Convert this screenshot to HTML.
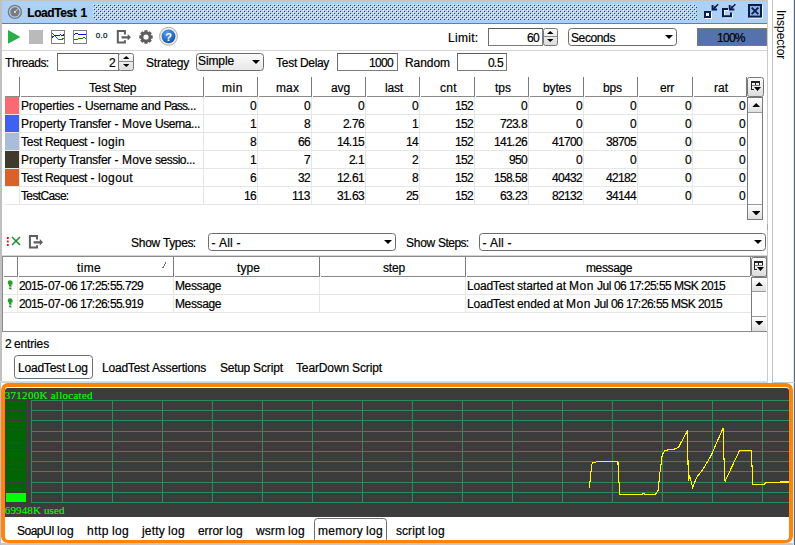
<!DOCTYPE html><html><head><meta charset="utf-8"><title>LoadTest 1</title><style>
*{box-sizing:border-box;margin:0;padding:0}
html,body{width:795px;height:545px;overflow:hidden;background:#fff}
body{position:relative;font-family:"Liberation Sans",sans-serif;font-size:12px;color:#000;-webkit-text-stroke-width:0.2px}
.a{position:absolute}
.t{position:absolute;white-space:nowrap;line-height:14px;height:14px}
.w{position:absolute;top:0}
.r{text-align:right}
.c{text-align:center}
.hl{position:absolute;height:1px;background:#e6e6e6}
.vl{position:absolute;width:1px;background:#e6e6e6}
.inp{position:absolute;background:#fff;border:1px solid #7c7c7c;border-top-color:#5c5c5c;border-left-color:#6c6c6c}
.cmb{position:absolute;background:#fff;border:1px solid #6c6c6c;border-radius:3.500px}
.sb{position:absolute;background:linear-gradient(#fbfbfb,#dcdcdc);border:1px solid #787878;border-radius:2.500px}
</style></head><body>
<div class="a" style="left:0px;top:0px;width:768px;height:1px;background:#c4c4c4"></div>
<div class="a" style="left:794px;top:0px;width:1px;height:545px;background:#56667a"></div>
<div class="a" style="left:793px;top:0px;width:1px;height:545px;background:#e4e8ee"></div>
<div class="a" style="left:0px;top:0px;width:2px;height:382px;background:#c0c0c0"></div>
<div class="a" style="left:2px;top:1px;width:765px;height:22px;background:#acd0f6"></div>
<div class="a" style="left:2px;top:23px;width:765px;height:1px;background:#7a7a7a"></div>
<svg class="a" style="left:93px;top:4px" width="604" height="16" shape-rendering="crispEdges"><defs><pattern id="dp" width="4" height="4" patternUnits="userSpaceOnUse"><rect x="0" y="0" width="1" height="1" fill="#fff"/><rect x="2" y="2" width="1" height="1" fill="#fff"/><rect x="1" y="1" width="1" height="1" fill="#1f3c8c"/><rect x="3" y="3" width="1" height="1" fill="#1f3c8c"/></pattern></defs><rect width="604" height="16" fill="url(#dp)"/></svg>
<svg class="a" style="left:7px;top:4px" width="16" height="16" viewBox="0 0 16 16"><circle cx="7.900" cy="7.900" r="6.500" fill="none" stroke="#7c7c7c" stroke-width="1.400"/><circle cx="7.900" cy="7.900" r="4.600" fill="#7a7a7a"/><path d="M7.900 7.900L11 4.800" stroke="#d0dcec" stroke-width="0.900"/><circle cx="7.900" cy="7.900" r="1" fill="#e8f0fa"/></svg>
<div class="t" id="title" style="left:27.25px;top:6px;letter-spacing:-0.436px;font-weight:bold;">LoadTest</div>
<div class="t" style="left:80.60px;top:6px;letter-spacing:0.000px;font-weight:bold;">1</div>
<svg class="a" style="left:698px;top:0" width="70" height="24" viewBox="698 0 70 24"><g transform="translate(1,1)" opacity="0.9"><rect x="705" y="12" width="5" height="5" fill="none" stroke="#fff" stroke-width="2"/><path d="M723 9v7.300h8v-3.800M723 9h5" fill="none" stroke="#fff" stroke-width="2"/><rect x="749" y="5" width="12" height="11.600" fill="none" stroke="#fff" stroke-width="2"/></g><rect x="705" y="12" width="5" height="5" fill="#fff" stroke="#0c1c4c" stroke-width="2"/><path d="M711.6 10.6v-5.500h1.800v3.700h3.700v1.800z" fill="#0c1c4c"/><path d="M713.4 8.8v-3.700l3.700 3.700z" fill="#2e4e9e"/><path d="M713.1 9.1L718.2 4.2" stroke="#0c1c4c" stroke-width="1.500"/><path d="M728 9h-5v7.300h8v-3.800" fill="none" stroke="#0c1c4c" stroke-width="2"/><path d="M728.8 10.6v-5.500h1.800v3.700h3.700v1.800z" fill="#0c1c4c"/><path d="M730.6 8.8v-3.700l3.700 3.700z" fill="#2e4e9e"/><path d="M730.3 9.1L735.4 4.2" stroke="#0c1c4c" stroke-width="1.500"/><rect x="749" y="5" width="12" height="11.600" fill="#8ab2e8" stroke="#0c1c4c" stroke-width="2"/><path d="M751.700 7.600l6.600 6.600M758.300 7.600l-6.600 6.600" stroke="#0c1c4c" stroke-width="1.900"/></svg>
<div class="a" style="left:767px;top:0px;width:1px;height:382px;background:#cacaca"></div>
<div class="a" style="left:767px;top:224px;width:1px;height:6px;background:#a8a8a8"></div>
<div class="a" style="left:772px;top:0px;width:1px;height:383px;background:#bebebe"></div>
<div class="t" id="insp" style="left:788.400px;top:10px;transform-origin:0 0;transform:rotate(90deg);letter-spacing:0px;-webkit-text-stroke-width:0">Inspector</div>
<div class="a" style="left:0px;top:381px;width:768px;height:1px;background:#dcdcdc"></div>
<div class="a" style="left:0px;top:382px;width:768px;height:1px;background:#d4d4d4"></div>
<div class="a" style="left:773px;top:382px;width:22px;height:1px;background:#c8c8c8"></div>
<svg class="a" style="left:0;top:24px" width="200" height="26" viewBox="0 24 200 26"><path d="M8 30L20.500 36.900L8 43.800z" fill="#2bae4a"/><rect x="29" y="30" width="14" height="14" fill="#bababa"/><rect x="51.500" y="30.500" width="13" height="13" fill="#fff" stroke="#7f7f7f"/><path d="M52 32.800L54.700 35.500L58.200 39.500H61.500L64 38.300" fill="none" stroke="#108010" stroke-width="1" shape-rendering="crispEdges"/><path d="M52 37.600L54.500 35.300H59.500L60.300 34.600L61.500 35.300H63L64 34.500" fill="none" stroke="#1010e0" stroke-width="1" shape-rendering="crispEdges"/><rect x="73.500" y="30.500" width="13" height="13" fill="#fff" stroke="#7f7f7f"/><path d="M74 34.400L75.500 33.500H77.500L78.500 34.400H82L83 35.200L84.500 34.400H86" fill="none" stroke="#1010e0" stroke-width="1" shape-rendering="crispEdges"/><path d="M74 39.500H77L78.500 38.500H82.500L84 37.300L86 38.500" fill="none" stroke="#108010" stroke-width="1" shape-rendering="crispEdges"/><path d="M124.9 34.4V31H117.8V42.5H124.9V40.3" fill="none" stroke="#5e5e5e" stroke-width="2"/><path d="M121.5 36.2h6.200v-2.100l3.200 3.250l-3.200 3.250v-2.100h-6.200z" fill="#5e5e5e"/></svg>
<div class="t" style="left:95.700px;top:28.800px;font-size:8px;color:#022;letter-spacing:0.350px;-webkit-text-stroke-width:0.250px">0.0</div>
<svg class="a" style="left:0;top:0" width="200" height="50"><path d="M152.73 35.49L152.73 38.51L150.61 38.95L150.63 38.88L151.83 40.70L149.70 42.83L147.88 41.63L147.95 41.61L147.51 43.73L144.49 43.73L144.05 41.61L144.12 41.63L142.30 42.83L140.17 40.70L141.37 38.88L141.39 38.95L139.27 38.51L139.27 35.49L141.39 35.05L141.37 35.12L140.17 33.30L142.30 31.17L144.12 32.37L144.05 32.39L144.49 30.27L147.51 30.27L147.95 32.39L147.88 32.37L149.70 31.17L151.83 33.30L150.63 35.12L150.61 35.05z" fill="#5e5e5e"/><circle cx="146" cy="37" r="2.600" fill="#fff"/><defs><radialGradient id="hg" cx="0.4" cy="0.3" r="0.8"><stop offset="0" stop-color="#5aa0f0"/><stop offset="1" stop-color="#0a4aa8"/></radialGradient></defs><circle cx="168.500" cy="36.300" r="9" fill="#ececee" stroke="#a4a6aa" stroke-width="0.900"/><circle cx="168.500" cy="36.300" r="6.900" fill="url(#hg)"/><text x="168.500" y="40.500" text-anchor="middle" font-family="Liberation Sans" font-weight="bold" font-size="11" fill="#fff" style="-webkit-text-stroke-width:0">?</text></svg>
<div class="hl" style="left:2px;top:50px;width:765px;background:#d4d4d4"></div>
<div class="t" style="left:448px;top:31px;"><span class="w" style="left:0px;letter-spacing:0.333px">Limit</span><span class="w" style="left:26.8328px">:</span></div>
<div class="inp" style="left:488px;top:28px;width:55px;height:18px"></div>
<div class="t" style="left:527px;top:31px"><span class="w" style="left:0px;letter-spacing:-0.673px">60</span></div>
<div class="sb" style="left:543px;top:28px;width:15px;height:18px"></div>
<svg class="a" style="left:547.25px;top:30.8px" width="6.5" height="3"><path d="M0 3h6.5L3.25 0z" fill="#000"/></svg>
<svg class="a" style="left:547.25px;top:38.7px" width="6.5" height="3"><path d="M0 0h6.5L3.25 3z" fill="#000"/></svg>
<div class="a" style="left:544px;top:36px;width:13px;height:1px;background:#8a8a8a"></div>
<div class="cmb" style="left:568px;top:28px;width:109px;height:18px"></div>
<div class="t" style="left:571px;top:31px;"><span class="w" style="left:0px;letter-spacing:-0.385px">Seconds</span></div>
<svg class="a" style="left:665px;top:35px" width="8" height="4"><path d="M0 0h8L4 4z" fill="#000"/></svg>
<div class="a" style="left:697px;top:28px;width:70px;height:18px;background:#5572ab;border:1px solid #787878"></div>
<div class="t" style="left:717px;top:31px;"><span class="w" style="left:0px;letter-spacing:-0.673px">100</span><span class="w" style="left:17.6648px">%</span></div>
<div class="t" style="left:5px;top:56px;"><span class="w" style="left:0px;letter-spacing:-0.431px">Threads</span><span class="w" style="left:40.8328px">:</span></div>
<div class="inp" style="left:57px;top:53px;width:62px;height:18px"></div>
<div class="t" style="left:109px;top:56px"><span class="w" style="left:0px;letter-spacing:-0.673px">2</span></div>
<div class="sb" style="left:118px;top:53px;width:16px;height:18px"></div>
<svg class="a" style="left:122.75px;top:55.8px" width="6.5" height="3"><path d="M0 3h6.5L3.25 0z" fill="#000"/></svg>
<svg class="a" style="left:122.75px;top:63.7px" width="6.5" height="3"><path d="M0 0h6.5L3.25 3z" fill="#000"/></svg>
<div class="a" style="left:119px;top:61px;width:14px;height:1px;background:#8a8a8a"></div>
<div class="t" style="left:146px;top:56px;"><span class="w" style="left:0px;letter-spacing:-0.211px">Strategy</span></div>
<div class="cmb" style="left:196px;top:53px;width:68px;height:18px;background:linear-gradient(#fafafa,#e8e8e8)"></div>
<div class="t" style="left:198px;top:54px;"><span class="w" style="left:0px;letter-spacing:-0.113px">Simple</span></div>
<svg class="a" style="left:252px;top:60px" width="8" height="4"><path d="M0 0h8L4 4z" fill="#000"/></svg>
<div class="t" style="left:276px;top:56px;"><span class="w" style="left:0px;letter-spacing:-0.252px">Test</span> <span class="w" style="left:24px;letter-spacing:-0.336px">Delay</span></div>
<div class="inp" style="left:337px;top:53px;width:61px;height:18px"></div>
<div class="t" style="left:369px;top:56px"><span class="w" style="left:0px;letter-spacing:-0.673px">1000</span></div>
<div class="t" style="left:405px;top:56px;"><span class="w" style="left:0px;letter-spacing:-0.059px">Random</span></div>
<div class="inp" style="left:457px;top:53px;width:50px;height:18px"></div>
<div class="t" style="left:488px;top:56px"><span class="w" style="left:0px;letter-spacing:-0.673px">0</span><span class="w" style="left:5.83281px">.</span><span class="w" style="left:9px;letter-spacing:-0.673px">5</span></div>
<div class="hl" style="left:5px;top:96px;width:742px;background:#8a8a8a"></div>
<div class="vl" style="left:19px;top:77px;height:19px;background:#7a7a7a"></div>
<div class="vl" style="left:203px;top:77px;height:19px;background:#7a7a7a"></div>
<div class="vl" style="left:257px;top:77px;height:19px;background:#7a7a7a"></div>
<div class="vl" style="left:311px;top:77px;height:19px;background:#7a7a7a"></div>
<div class="vl" style="left:365px;top:77px;height:19px;background:#7a7a7a"></div>
<div class="vl" style="left:419px;top:77px;height:19px;background:#7a7a7a"></div>
<div class="vl" style="left:474px;top:77px;height:19px;background:#7a7a7a"></div>
<div class="vl" style="left:528px;top:77px;height:19px;background:#7a7a7a"></div>
<div class="vl" style="left:583px;top:77px;height:19px;background:#7a7a7a"></div>
<div class="vl" style="left:637px;top:77px;height:19px;background:#7a7a7a"></div>
<div class="vl" style="left:692px;top:77px;height:19px;background:#7a7a7a"></div>
<div class="vl" style="left:746px;top:77px;height:19px;background:#7a7a7a"></div>
<div class="a" style="left:20px;top:96px;width:1px;height:1px;background:#fff"></div>
<div class="a" style="left:204px;top:96px;width:1px;height:1px;background:#fff"></div>
<div class="a" style="left:258px;top:96px;width:1px;height:1px;background:#fff"></div>
<div class="a" style="left:312px;top:96px;width:1px;height:1px;background:#fff"></div>
<div class="a" style="left:366px;top:96px;width:1px;height:1px;background:#fff"></div>
<div class="a" style="left:420px;top:96px;width:1px;height:1px;background:#fff"></div>
<div class="a" style="left:475px;top:96px;width:1px;height:1px;background:#fff"></div>
<div class="a" style="left:529px;top:96px;width:1px;height:1px;background:#fff"></div>
<div class="a" style="left:584px;top:96px;width:1px;height:1px;background:#fff"></div>
<div class="a" style="left:638px;top:96px;width:1px;height:1px;background:#fff"></div>
<div class="a" style="left:693px;top:96px;width:1px;height:1px;background:#fff"></div>
<div class="a" style="left:747px;top:96px;width:1px;height:1px;background:#fff"></div>
<div class="t" style="left:89px;top:81px;"><span class="w" style="left:0px;letter-spacing:-0.252px">Test</span> <span class="w" style="left:24px;letter-spacing:-0.421px">Step</span></div>
<div class="t" style="left:222px;top:81px;"><span class="w" style="left:0px;letter-spacing:0.555px">min</span></div>
<div class="t" style="left:276px;top:81px;"><span class="w" style="left:0px;letter-spacing:0.110px">max</span></div>
<div class="t" style="left:331px;top:81px;"><span class="w" style="left:0px;letter-spacing:-0.116px">avg</span></div>
<div class="t" style="left:385px;top:81px;"><span class="w" style="left:0px;letter-spacing:-0.168px">last</span></div>
<div class="t" style="left:440px;top:81px;"><span class="w" style="left:0px;letter-spacing:0.331px">cnt</span></div>
<div class="t" style="left:495px;top:81px;"><span class="w" style="left:0px;letter-spacing:-0.003px">tps</span></div>
<div class="t" style="left:543px;top:81px;"><span class="w" style="left:0px;letter-spacing:-0.136px">bytes</span></div>
<div class="t" style="left:603px;top:81px;"><span class="w" style="left:0px;letter-spacing:-0.116px">bps</span></div>
<div class="t" style="left:660px;top:81px;"><span class="w" style="left:0px;letter-spacing:-0.222px">err</span></div>
<div class="t" style="left:714px;top:81px;"><span class="w" style="left:0px;letter-spacing:-0.002px">rat</span></div>
<div class="a" style="left:5px;top:97px;width:14px;height:17px;background:#fa6a73"></div>
<div class="t" style="left:21px;top:99px;"><span class="w" style="left:0px;letter-spacing:-0.169px">Properties</span> <span class="w" style="left:56.5016px">-</span> <span class="w" style="left:64px;letter-spacing:-0.294px">Username</span> <span class="w" style="left:120px;letter-spacing:-0.007px">and</span> <span class="w" style="left:143px;letter-spacing:-0.920px">Pass</span><span class="w" style="left:166px;letter-spacing:-0.334px">...</span></div>
<div class="t" style="left:250px;top:99px"><span class="w" style="left:0px;letter-spacing:-0.673px">0</span></div>
<div class="t" style="left:304px;top:99px"><span class="w" style="left:0px;letter-spacing:-0.673px">0</span></div>
<div class="t" style="left:358px;top:99px"><span class="w" style="left:0px;letter-spacing:-0.673px">0</span></div>
<div class="t" style="left:412px;top:99px"><span class="w" style="left:0px;letter-spacing:-0.673px">0</span></div>
<div class="t" style="left:455px;top:99px"><span class="w" style="left:0px;letter-spacing:-0.673px">152</span></div>
<div class="t" style="left:521px;top:99px"><span class="w" style="left:0px;letter-spacing:-0.673px">0</span></div>
<div class="t" style="left:576px;top:99px"><span class="w" style="left:0px;letter-spacing:-0.673px">0</span></div>
<div class="t" style="left:630px;top:99px"><span class="w" style="left:0px;letter-spacing:-0.673px">0</span></div>
<div class="t" style="left:685px;top:99px"><span class="w" style="left:0px;letter-spacing:-0.673px">0</span></div>
<div class="t" style="left:739px;top:99px"><span class="w" style="left:0px;letter-spacing:-0.673px">0</span></div>
<div class="hl" style="left:5px;top:114px;width:742px"></div>
<div class="a" style="left:5px;top:115px;width:14px;height:17px;background:#4060f0"></div>
<div class="t" style="left:21px;top:117px;"><span class="w" style="left:0px;letter-spacing:-0.044px">Property</span> <span class="w" style="left:48px;letter-spacing:-0.279px">Transfer</span> <span class="w" style="left:93.5016px">-</span> <span class="w" style="left:101px;letter-spacing:0.164px">Move</span> <span class="w" style="left:134px;letter-spacing:-0.447px">Userna</span><span class="w" style="left:170px;letter-spacing:-0.334px">...</span></div>
<div class="t" style="left:250px;top:117px"><span class="w" style="left:0px;letter-spacing:-0.673px">1</span></div>
<div class="t" style="left:304px;top:117px"><span class="w" style="left:0px;letter-spacing:-0.673px">8</span></div>
<div class="t" style="left:343px;top:117px"><span class="w" style="left:0px;letter-spacing:-0.673px">2</span><span class="w" style="left:5.83281px">.</span><span class="w" style="left:9px;letter-spacing:-0.673px">76</span></div>
<div class="t" style="left:412px;top:117px"><span class="w" style="left:0px;letter-spacing:-0.673px">1</span></div>
<div class="t" style="left:455px;top:117px"><span class="w" style="left:0px;letter-spacing:-0.673px">152</span></div>
<div class="t" style="left:500px;top:117px"><span class="w" style="left:0px;letter-spacing:-0.673px">723</span><span class="w" style="left:17.8328px">.</span><span class="w" style="left:21px;letter-spacing:-0.673px">8</span></div>
<div class="t" style="left:576px;top:117px"><span class="w" style="left:0px;letter-spacing:-0.673px">0</span></div>
<div class="t" style="left:630px;top:117px"><span class="w" style="left:0px;letter-spacing:-0.673px">0</span></div>
<div class="t" style="left:685px;top:117px"><span class="w" style="left:0px;letter-spacing:-0.673px">0</span></div>
<div class="t" style="left:739px;top:117px"><span class="w" style="left:0px;letter-spacing:-0.673px">0</span></div>
<div class="hl" style="left:5px;top:132px;width:742px"></div>
<div class="a" style="left:5px;top:133px;width:14px;height:17px;background:#a9bcd9"></div>
<div class="t" style="left:21px;top:135px;"><span class="w" style="left:0px;letter-spacing:-0.252px">Test</span> <span class="w" style="left:24px;letter-spacing:-0.385px">Request</span> <span class="w" style="left:69.5016px">-</span> <span class="w" style="left:77px;letter-spacing:0.330px">login</span></div>
<div class="t" style="left:250px;top:135px"><span class="w" style="left:0px;letter-spacing:-0.673px">8</span></div>
<div class="t" style="left:298px;top:135px"><span class="w" style="left:0px;letter-spacing:-0.673px">66</span></div>
<div class="t" style="left:337px;top:135px"><span class="w" style="left:0px;letter-spacing:-0.673px">14</span><span class="w" style="left:11.8328px">.</span><span class="w" style="left:15px;letter-spacing:-0.673px">15</span></div>
<div class="t" style="left:406px;top:135px"><span class="w" style="left:0px;letter-spacing:-0.673px">14</span></div>
<div class="t" style="left:455px;top:135px"><span class="w" style="left:0px;letter-spacing:-0.673px">152</span></div>
<div class="t" style="left:494px;top:135px"><span class="w" style="left:0px;letter-spacing:-0.673px">141</span><span class="w" style="left:17.8328px">.</span><span class="w" style="left:21px;letter-spacing:-0.673px">26</span></div>
<div class="t" style="left:552px;top:135px"><span class="w" style="left:0px;letter-spacing:-0.673px">41700</span></div>
<div class="t" style="left:606px;top:135px"><span class="w" style="left:0px;letter-spacing:-0.673px">38705</span></div>
<div class="t" style="left:685px;top:135px"><span class="w" style="left:0px;letter-spacing:-0.673px">0</span></div>
<div class="t" style="left:739px;top:135px"><span class="w" style="left:0px;letter-spacing:-0.673px">0</span></div>
<div class="hl" style="left:5px;top:150px;width:742px"></div>
<div class="a" style="left:5px;top:151px;width:14px;height:17px;background:#3e3a2c"></div>
<div class="t" style="left:21px;top:153px;"><span class="w" style="left:0px;letter-spacing:-0.044px">Property</span> <span class="w" style="left:48px;letter-spacing:-0.279px">Transfer</span> <span class="w" style="left:93.5016px">-</span> <span class="w" style="left:101px;letter-spacing:0.164px">Move</span> <span class="w" style="left:134px;letter-spacing:-0.502px">sessio</span><span class="w" style="left:165px;letter-spacing:-0.334px">...</span></div>
<div class="t" style="left:250px;top:153px"><span class="w" style="left:0px;letter-spacing:-0.673px">1</span></div>
<div class="t" style="left:304px;top:153px"><span class="w" style="left:0px;letter-spacing:-0.673px">7</span></div>
<div class="t" style="left:349px;top:153px"><span class="w" style="left:0px;letter-spacing:-0.673px">2</span><span class="w" style="left:5.83281px">.</span><span class="w" style="left:9px;letter-spacing:-0.673px">1</span></div>
<div class="t" style="left:412px;top:153px"><span class="w" style="left:0px;letter-spacing:-0.673px">2</span></div>
<div class="t" style="left:455px;top:153px"><span class="w" style="left:0px;letter-spacing:-0.673px">152</span></div>
<div class="t" style="left:509px;top:153px"><span class="w" style="left:0px;letter-spacing:-0.673px">950</span></div>
<div class="t" style="left:576px;top:153px"><span class="w" style="left:0px;letter-spacing:-0.673px">0</span></div>
<div class="t" style="left:630px;top:153px"><span class="w" style="left:0px;letter-spacing:-0.673px">0</span></div>
<div class="t" style="left:685px;top:153px"><span class="w" style="left:0px;letter-spacing:-0.673px">0</span></div>
<div class="t" style="left:739px;top:153px"><span class="w" style="left:0px;letter-spacing:-0.673px">0</span></div>
<div class="hl" style="left:5px;top:168px;width:742px"></div>
<div class="a" style="left:5px;top:169px;width:14px;height:17px;background:#d9622b"></div>
<div class="t" style="left:21px;top:171px;"><span class="w" style="left:0px;letter-spacing:-0.252px">Test</span> <span class="w" style="left:24px;letter-spacing:-0.385px">Request</span> <span class="w" style="left:69.5016px">-</span> <span class="w" style="left:77px;letter-spacing:0.384px">logout</span></div>
<div class="t" style="left:250px;top:171px"><span class="w" style="left:0px;letter-spacing:-0.673px">6</span></div>
<div class="t" style="left:298px;top:171px"><span class="w" style="left:0px;letter-spacing:-0.673px">32</span></div>
<div class="t" style="left:337px;top:171px"><span class="w" style="left:0px;letter-spacing:-0.673px">12</span><span class="w" style="left:11.8328px">.</span><span class="w" style="left:15px;letter-spacing:-0.673px">61</span></div>
<div class="t" style="left:412px;top:171px"><span class="w" style="left:0px;letter-spacing:-0.673px">8</span></div>
<div class="t" style="left:455px;top:171px"><span class="w" style="left:0px;letter-spacing:-0.673px">152</span></div>
<div class="t" style="left:494px;top:171px"><span class="w" style="left:0px;letter-spacing:-0.673px">158</span><span class="w" style="left:17.8328px">.</span><span class="w" style="left:21px;letter-spacing:-0.673px">58</span></div>
<div class="t" style="left:552px;top:171px"><span class="w" style="left:0px;letter-spacing:-0.673px">40432</span></div>
<div class="t" style="left:606px;top:171px"><span class="w" style="left:0px;letter-spacing:-0.673px">42182</span></div>
<div class="t" style="left:685px;top:171px"><span class="w" style="left:0px;letter-spacing:-0.673px">0</span></div>
<div class="t" style="left:739px;top:171px"><span class="w" style="left:0px;letter-spacing:-0.673px">0</span></div>
<div class="hl" style="left:5px;top:186px;width:742px"></div>
<div class="t" style="left:21px;top:189px;"><span class="w" style="left:0px;letter-spacing:-0.628px">TestCase</span><span class="w" style="left:44.8328px">:</span></div>
<div class="t" style="left:244px;top:189px"><span class="w" style="left:0px;letter-spacing:-0.673px">16</span></div>
<div class="t" style="left:292px;top:189px"><span class="w" style="left:0px;letter-spacing:-0.377px">113</span></div>
<div class="t" style="left:337px;top:189px"><span class="w" style="left:0px;letter-spacing:-0.673px">31</span><span class="w" style="left:11.8328px">.</span><span class="w" style="left:15px;letter-spacing:-0.673px">63</span></div>
<div class="t" style="left:406px;top:189px"><span class="w" style="left:0px;letter-spacing:-0.673px">25</span></div>
<div class="t" style="left:455px;top:189px"><span class="w" style="left:0px;letter-spacing:-0.673px">152</span></div>
<div class="t" style="left:500px;top:189px"><span class="w" style="left:0px;letter-spacing:-0.673px">63</span><span class="w" style="left:11.8328px">.</span><span class="w" style="left:15px;letter-spacing:-0.673px">23</span></div>
<div class="t" style="left:552px;top:189px"><span class="w" style="left:0px;letter-spacing:-0.673px">82132</span></div>
<div class="t" style="left:606px;top:189px"><span class="w" style="left:0px;letter-spacing:-0.673px">34144</span></div>
<div class="t" style="left:685px;top:189px"><span class="w" style="left:0px;letter-spacing:-0.673px">0</span></div>
<div class="t" style="left:739px;top:189px"><span class="w" style="left:0px;letter-spacing:-0.673px">0</span></div>
<div class="hl" style="left:5px;top:204px;width:742px"></div>
<div class="vl" style="left:19px;top:97px;height:108px"></div>
<div class="vl" style="left:203px;top:97px;height:108px"></div>
<div class="vl" style="left:257px;top:97px;height:108px"></div>
<div class="vl" style="left:311px;top:97px;height:108px"></div>
<div class="vl" style="left:365px;top:97px;height:108px"></div>
<div class="vl" style="left:419px;top:97px;height:108px"></div>
<div class="vl" style="left:474px;top:97px;height:108px"></div>
<div class="vl" style="left:528px;top:97px;height:108px"></div>
<div class="vl" style="left:583px;top:97px;height:108px"></div>
<div class="vl" style="left:637px;top:97px;height:108px"></div>
<div class="vl" style="left:692px;top:97px;height:108px"></div>
<div class="sb" style="left:747px;top:77px;width:17px;height:20px"></div>
<svg class="a" style="left:747.5px;top:77px" width="16" height="19" viewBox="0 0 16 19" shape-rendering="crispEdges"><rect x="3" y="4" width="9" height="2" fill="#222"/><rect x="3" y="4" width="1" height="9" fill="#222"/><rect x="3" y="12" width="3" height="1" fill="#222"/><rect x="7" y="6" width="1" height="3" fill="#222"/><rect x="11" y="6" width="1" height="3" fill="#222"/><rect x="4" y="8" width="8" height="1" fill="#777"/><path d="M6 10h7l-3.500 4z" fill="#000" shape-rendering="auto"/></svg>
<div class="a" style="left:747px;top:97px;width:16px;height:123px;background:#fff;border:1px solid #7a7a7a"></div>
<div class="a" style="left:748px;top:98px;width:14px;height:15px;background:linear-gradient(#fff,#e0e0e0);border-bottom:1px solid #9a9a9a"></div>
<svg class="a" style="left:751.8px;top:103px" width="8.4" height="4.4"><path d="M0 4.4h8.4L4.2 0z" fill="#000"/></svg>
<div class="a" style="left:748px;top:204px;width:14px;height:15px;background:linear-gradient(#fff,#e0e0e0);border-top:1px solid #9a9a9a"></div>
<svg class="a" style="left:751.8px;top:211px" width="8.4" height="4.4"><path d="M0 0h8.4L4.2 4.4z" fill="#000"/></svg>
<svg class="a" style="left:4px;top:234px" width="44" height="16" viewBox="0 0 44 16"><path d="M8 3l8 8M16 3l-8 8" stroke="#1a8a2a" stroke-width="1.500"/><path d="M3.800 3v2M3.800 6.500v2M3.800 10v2" stroke="#f01010" stroke-width="1.800"/><path d="M33 5.4V2H25.9V13.5H33V11.3" fill="none" stroke="#5e5e5e" stroke-width="2"/><path d="M29.6 7.2h6.200v-2.100l3.200 3.250l-3.200 3.250v-2.100h-6.200z" fill="#5e5e5e"/></svg>
<div class="t" style="left:131px;top:236px;"><span class="w" style="left:0px;letter-spacing:-0.254px">Show</span> <span class="w" style="left:32px;letter-spacing:-0.403px">Types</span><span class="w" style="left:61.8328px">:</span></div>
<div class="cmb" style="left:208px;top:233px;width:188px;height:18px"></div>
<div class="t" style="left:211px;top:236px;"><span class="w" style="left:0.501562px">-</span> <span class="w" style="left:8px;letter-spacing:0.221px">All</span> <span class="w" style="left:25.5016px">-</span></div>
<svg class="a" style="left:384px;top:240px" width="8" height="4"><path d="M0 0h8L4 4z" fill="#000"/></svg>
<div class="t" style="left:406px;top:236px;"><span class="w" style="left:0px;letter-spacing:-0.254px">Show</span> <span class="w" style="left:32px;letter-spacing:-0.537px">Steps</span><span class="w" style="left:59.8328px">:</span></div>
<div class="cmb" style="left:479px;top:233px;width:287px;height:18px"></div>
<div class="t" style="left:482px;top:236px;"><span class="w" style="left:0.501562px">-</span> <span class="w" style="left:8px;letter-spacing:0.221px">All</span> <span class="w" style="left:25.5016px">-</span></div>
<svg class="a" style="left:754px;top:240px" width="8" height="4"><path d="M0 0h8L4 4z" fill="#000"/></svg>
<div class="a" style="left:2px;top:256px;width:765px;height:76px;border:1px solid #8a8a8a"></div>
<div class="hl" style="left:4px;top:276px;width:746px;background:#8a8a8a"></div>
<div class="a" style="left:2px;top:255px;width:765px;height:1px;background:#d4d4d4"></div>
<div class="vl" style="left:17px;top:257px;height:19px;background:#7a7a7a"></div>
<div class="a" style="left:18px;top:276px;width:1px;height:1px;background:#fff"></div>
<div class="vl" style="left:173px;top:257px;height:19px;background:#7a7a7a"></div>
<div class="a" style="left:174px;top:276px;width:1px;height:1px;background:#fff"></div>
<div class="vl" style="left:319px;top:257px;height:19px;background:#7a7a7a"></div>
<div class="a" style="left:320px;top:276px;width:1px;height:1px;background:#fff"></div>
<div class="vl" style="left:465px;top:257px;height:19px;background:#7a7a7a"></div>
<div class="a" style="left:466px;top:276px;width:1px;height:1px;background:#fff"></div>
<div class="vl" style="left:750px;top:257px;height:19px;background:#7a7a7a"></div>
<div class="a" style="left:751px;top:276px;width:1px;height:1px;background:#fff"></div>
<div class="t" style="left:77px;top:261px;"><span class="w" style="left:0px;letter-spacing:0.332px">time</span></div>
<div class="t" style="left:237px;top:261px;"><span class="w" style="left:0px;letter-spacing:0.080px">type</span></div>
<div class="t" style="left:383px;top:261px;"><span class="w" style="left:0px;letter-spacing:-0.170px">step</span></div>
<div class="t" style="left:586px;top:261px;"><span class="w" style="left:0px;letter-spacing:-0.384px">message</span></div>
<svg class="a" style="left:162px;top:262px" width="5" height="7"><path d="M0.500 6.500L4 0.500" stroke="#6e6e6e" stroke-width="1" shape-rendering="crispEdges"/></svg>
<div class="t" style="left:19px;top:279px;"><span class="w" style="left:0px;letter-spacing:-0.673px">2015</span><span class="w" style="left:24.5016px">-</span><span class="w" style="left:29px;letter-spacing:-0.673px">07</span><span class="w" style="left:41.5016px">-</span><span class="w" style="left:46px;letter-spacing:-0.673px">06</span> <span class="w" style="left:61px;letter-spacing:-0.673px">17</span><span class="w" style="left:72.8328px">:</span><span class="w" style="left:76px;letter-spacing:-0.673px">25</span><span class="w" style="left:87.8328px">:</span><span class="w" style="left:91px;letter-spacing:-0.673px">55</span><span class="w" style="left:102.833px">.</span><span class="w" style="left:106px;letter-spacing:-0.673px">729</span></div>
<div class="t" style="left:175px;top:279px;"><span class="w" style="left:0px;letter-spacing:-0.384px">Message</span></div>
<div class="t" style="left:467px;top:279px;"><span class="w" style="left:0px;letter-spacing:-0.213px">LoadTest</span> <span class="w" style="left:50px;letter-spacing:-0.098px">started</span> <span class="w" style="left:89px;letter-spacing:-0.004px">at</span> <span class="w" style="left:102px;letter-spacing:0.552px">Mon</span> <span class="w" style="left:130px;letter-spacing:-0.446px">Jul</span> <span class="w" style="left:147px;letter-spacing:-0.673px">06</span> <span class="w" style="left:162px;letter-spacing:-0.673px">17</span><span class="w" style="left:173.833px">:</span><span class="w" style="left:177px;letter-spacing:-0.673px">25</span><span class="w" style="left:188.833px">:</span><span class="w" style="left:192px;letter-spacing:-0.673px">55</span> <span class="w" style="left:207px;letter-spacing:-0.669px">MSK</span> <span class="w" style="left:234px;letter-spacing:-0.673px">2015</span></div>
<div class="hl" style="left:3px;top:294px;width:748px"></div>
<svg class="a" style="left:7px;top:280px" width="8" height="11"><g fill="#b4b4b4" transform="translate(0.800,0.800)"><circle cx="3" cy="2.600" r="2.300"/><rect x="1.900" y="4.400" width="2.200" height="2"/><rect x="1.900" y="7.500" width="2.200" height="1.500"/></g><g fill="#22a022"><circle cx="3" cy="2.600" r="2.300"/><rect x="1.900" y="4.400" width="2.200" height="2"/><rect x="1.900" y="7.500" width="2.200" height="1.500"/></g></svg>
<div class="t" style="left:19px;top:297px;"><span class="w" style="left:0px;letter-spacing:-0.673px">2015</span><span class="w" style="left:24.5016px">-</span><span class="w" style="left:29px;letter-spacing:-0.673px">07</span><span class="w" style="left:41.5016px">-</span><span class="w" style="left:46px;letter-spacing:-0.673px">06</span> <span class="w" style="left:61px;letter-spacing:-0.673px">17</span><span class="w" style="left:72.8328px">:</span><span class="w" style="left:76px;letter-spacing:-0.673px">26</span><span class="w" style="left:87.8328px">:</span><span class="w" style="left:91px;letter-spacing:-0.673px">55</span><span class="w" style="left:102.833px">.</span><span class="w" style="left:106px;letter-spacing:-0.673px">919</span></div>
<div class="t" style="left:175px;top:297px;"><span class="w" style="left:0px;letter-spacing:-0.384px">Message</span></div>
<div class="t" style="left:467px;top:297px;"><span class="w" style="left:0px;letter-spacing:-0.213px">LoadTest</span> <span class="w" style="left:50px;letter-spacing:-0.073px">ended</span> <span class="w" style="left:86px;letter-spacing:-0.004px">at</span> <span class="w" style="left:99px;letter-spacing:0.552px">Mon</span> <span class="w" style="left:127px;letter-spacing:-0.446px">Jul</span> <span class="w" style="left:144px;letter-spacing:-0.673px">06</span> <span class="w" style="left:159px;letter-spacing:-0.673px">17</span><span class="w" style="left:170.833px">:</span><span class="w" style="left:174px;letter-spacing:-0.673px">26</span><span class="w" style="left:185.833px">:</span><span class="w" style="left:189px;letter-spacing:-0.673px">55</span> <span class="w" style="left:204px;letter-spacing:-0.669px">MSK</span> <span class="w" style="left:231px;letter-spacing:-0.673px">2015</span></div>
<div class="hl" style="left:3px;top:312px;width:748px"></div>
<svg class="a" style="left:7px;top:298px" width="8" height="11"><g fill="#b4b4b4" transform="translate(0.800,0.800)"><circle cx="3" cy="2.600" r="2.300"/><rect x="1.900" y="4.400" width="2.200" height="2"/><rect x="1.900" y="7.500" width="2.200" height="1.500"/></g><g fill="#22a022"><circle cx="3" cy="2.600" r="2.300"/><rect x="1.900" y="4.400" width="2.200" height="2"/><rect x="1.900" y="7.500" width="2.200" height="1.500"/></g></svg>
<div class="vl" style="left:17px;top:277px;height:36px"></div>
<div class="vl" style="left:173px;top:277px;height:36px"></div>
<div class="vl" style="left:319px;top:277px;height:36px"></div>
<div class="vl" style="left:465px;top:277px;height:36px"></div>
<div class="sb" style="left:751px;top:257px;width:16px;height:20px"></div>
<svg class="a" style="left:751px;top:257px" width="16" height="19" viewBox="0 0 16 19" shape-rendering="crispEdges"><rect x="3" y="4" width="9" height="2" fill="#222"/><rect x="3" y="4" width="1" height="9" fill="#222"/><rect x="3" y="12" width="3" height="1" fill="#222"/><rect x="7" y="6" width="1" height="3" fill="#222"/><rect x="11" y="6" width="1" height="3" fill="#222"/><rect x="4" y="8" width="8" height="1" fill="#777"/><path d="M6 10h7l-3.500 4z" fill="#000" shape-rendering="auto"/></svg>
<div class="a" style="left:751px;top:277px;width:16px;height:54px;background:#fff;border:1px solid #7a7a7a;border-right:none;border-bottom:none"></div>
<div class="a" style="left:752px;top:278px;width:14px;height:14px;background:linear-gradient(#fff,#e0e0e0);border-bottom:1px solid #9a9a9a"></div>
<svg class="a" style="left:754.8px;top:282px" width="8.4" height="4.4"><path d="M0 4.4h8.4L4.2 0z" fill="#000"/></svg>
<div class="a" style="left:752px;top:316px;width:14px;height:15px;background:linear-gradient(#fff,#e0e0e0);border-top:1px solid #9a9a9a"></div>
<svg class="a" style="left:754.8px;top:320.6px" width="8.4" height="4.4"><path d="M0 0h8.4L4.2 4.4z" fill="#000"/></svg>
<div class="t" style="left:5px;top:337px;"><span class="w" style="left:0px;letter-spacing:-0.673px">2</span> <span class="w" style="left:9px;letter-spacing:-0.145px">entries</span></div>
<div class="a" style="left:14px;top:355px;width:79px;height:24px;border:1px solid #6e6e6e;border-radius:3.500px;background:#fff"></div>
<div class="t" style="left:18px;top:361px;"><span class="w" style="left:0px;letter-spacing:-0.213px">LoadTest</span> <span class="w" style="left:50px;letter-spacing:-0.007px">Log</span></div>
<div class="t" style="left:102px;top:361px;"><span class="w" style="left:0px;letter-spacing:-0.213px">LoadTest</span> <span class="w" style="left:50px;letter-spacing:-0.202px">Assertions</span></div>
<div class="t" style="left:220px;top:361px;"><span class="w" style="left:0px;letter-spacing:-0.272px">Setup</span> <span class="w" style="left:33px;letter-spacing:-0.113px">Script</span></div>
<div class="t" style="left:296px;top:361px;"><span class="w" style="left:0px;letter-spacing:-0.128px">TearDown</span> <span class="w" style="left:56px;letter-spacing:-0.113px">Script</span></div>
<div class="a" style="left:0px;top:543px;width:793px;height:2px;background:#c8c8c8"></div>
<div class="a" style="left:0px;top:382px;width:1px;height:163px;background:#c0c0c0"></div>
<div class="a" style="left:1px;top:383px;width:792px;height:160px;border:4px solid #ff8408;border-bottom-width:3px;border-radius:7px;background:#fff"></div>
<div class="a" style="left:5px;top:388px;width:784px;height:129px;background:#3c3c3c;border-radius:3px 3px 0 0"></div>
<div class="t" style="left:4.80px;top:388px;letter-spacing:0.275px;font-family:'Liberation Serif',serif;font-size:11px;color:#00ff00;-webkit-text-stroke-width:0.150px;">371200K allocated</div>
<div class="t" style="left:4.80px;top:503px;letter-spacing:0.140px;font-family:'Liberation Serif',serif;font-size:11px;color:#00ff00;-webkit-text-stroke-width:0.150px;">69948K used</div>
<svg class="a" style="left:0;top:383px" width="795" height="140" viewBox="0 383 795 140" shape-rendering="crispEdges"><rect x="6" y="401" width="20" height="9" fill="#006400"/><rect x="6" y="411" width="20" height="9" fill="#006400"/><rect x="6" y="421" width="20" height="10" fill="#006400"/><rect x="6" y="432" width="20" height="9" fill="#006400"/><rect x="6" y="442" width="20" height="9" fill="#006400"/><rect x="6" y="452" width="20" height="9" fill="#006400"/><rect x="6" y="462" width="20" height="9" fill="#006400"/><rect x="6" y="472" width="20" height="10" fill="#006400"/><rect x="6" y="483" width="20" height="9" fill="#006400"/><rect x="6" y="493" width="20" height="9" fill="#00ff00"/><rect x="31" y="400" width="1" height="103" fill="#2e8b57"/><rect x="62" y="400" width="1" height="103" fill="#2e8b57"/><rect x="112" y="400" width="1" height="103" fill="#2e8b57"/><rect x="162" y="400" width="1" height="103" fill="#2e8b57"/><rect x="212" y="400" width="1" height="103" fill="#2e8b57"/><rect x="262" y="400" width="1" height="103" fill="#2e8b57"/><rect x="312" y="400" width="1" height="103" fill="#2e8b57"/><rect x="362" y="400" width="1" height="103" fill="#2e8b57"/><rect x="412" y="400" width="1" height="103" fill="#2e8b57"/><rect x="462" y="400" width="1" height="103" fill="#2e8b57"/><rect x="512" y="400" width="1" height="103" fill="#2e8b57"/><rect x="562" y="400" width="1" height="103" fill="#2e8b57"/><rect x="612" y="400" width="1" height="103" fill="#2e8b57"/><rect x="662" y="400" width="1" height="103" fill="#2e8b57"/><rect x="712" y="400" width="1" height="103" fill="#2e8b57"/><rect x="762" y="400" width="1" height="103" fill="#2e8b57"/><rect x="31" y="400" width="758" height="1" fill="#2e8b57"/><rect x="31" y="410" width="758" height="1" fill="#2e8b57"/><rect x="31" y="420" width="758" height="1" fill="#2e8b57"/><rect x="31" y="431" width="758" height="1" fill="#2e8b57"/><rect x="31" y="441" width="758" height="1" fill="#2e8b57"/><rect x="31" y="451" width="758" height="1" fill="#2e8b57"/><rect x="31" y="461" width="758" height="1" fill="#2e8b57"/><rect x="31" y="471" width="758" height="1" fill="#2e8b57"/><rect x="31" y="482" width="758" height="1" fill="#2e8b57"/><rect x="31" y="492" width="758" height="1" fill="#2e8b57"/><rect x="31" y="502" width="758" height="1" fill="#2e8b57"/></svg>
<svg class="a" style="left:0;top:383px" width="795" height="140" viewBox="0 383 795 140" shape-rendering="crispEdges"><polyline points="589.4,488.3 591.0,471.7 592.2,462.6 601.3,461.2 617.9,461.2 618.7,477.3 619.8,494.4 641.4,494.4 642.8,493.9 649.7,494.4 655.2,494.4 658.0,491.1 660.2,470.3 662.2,455.1 664.9,450.4 676.0,448.8 678.8,446.8 687.0,431.6 687.9,456.5 688.4,481.4 689.8,476.4 692.6,487.5 696.7,477.3 702.3,470.3 710.6,456.5 723.0,428.3 723.9,456.5 725.0,481.4 739.6,450.4 751.3,450.4 752.1,467.6 752.6,484.2 764.5,484.2 765.9,482.8 778.4,482.8 779.8,482.0 789.4,482.0" fill="none" stroke="#ffff00" stroke-width="1.100"/></svg>
<div class="a" style="left:314px;top:518px;width:73px;height:25px;border:1px solid #6e6e6e;border-radius:3.500px;background:#fff"></div>
<div class="a" style="left:300px;top:540px;width:100px;height:3px;background:#ff8408"></div>
<div class="t" style="left:17px;top:524px;"><span class="w" style="left:0px;letter-spacing:-0.504px">SoapUI</span> <span class="w" style="left:40px;letter-spacing:0.329px">log</span></div>
<div class="t" style="left:87px;top:524px;"><span class="w" style="left:0px;letter-spacing:0.496px">http</span> <span class="w" style="left:25px;letter-spacing:0.329px">log</span></div>
<div class="t" style="left:142px;top:524px;"><span class="w" style="left:0px;letter-spacing:0.198px">jetty</span> <span class="w" style="left:26px;letter-spacing:0.329px">log</span></div>
<div class="t" style="left:198px;top:524px;"><span class="w" style="left:0px;letter-spacing:-0.067px">error</span> <span class="w" style="left:28px;letter-spacing:0.329px">log</span></div>
<div class="t" style="left:256px;top:524px;"><span class="w" style="left:0px;letter-spacing:0.085px">wsrm</span> <span class="w" style="left:32px;letter-spacing:0.329px">log</span></div>
<div class="t" style="left:318px;top:524px;"><span class="w" style="left:0px;letter-spacing:0.277px">memory</span> <span class="w" style="left:48px;letter-spacing:0.329px">log</span></div>
<div class="t" style="left:396px;top:524px;"><span class="w" style="left:0px;letter-spacing:0.055px">script</span> <span class="w" style="left:32px;letter-spacing:0.329px">log</span></div>
</body></html>
